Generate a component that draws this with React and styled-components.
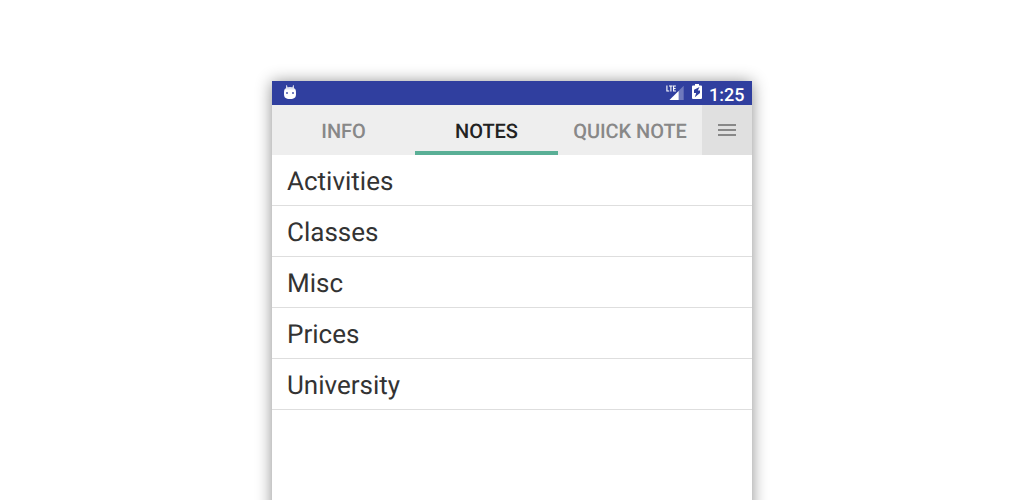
import React from "react";
import styled, { createGlobalStyle } from "styled-components";

const GlobalStyle = createGlobalStyle`
  *, *::before, *::after { box-sizing: border-box; }
  body {
    margin: 0;
    background: #fff;
    font-family: Roboto, "Liberation Sans", sans-serif;
    text-rendering: geometricPrecision;
    overflow: hidden;
  }
`;

const Stage = styled.main`
  height: 500px;
  padding-top: 81px;
  display: flex;
  justify-content: center;
  align-items: flex-start;
  overflow: hidden;
`;

const Phone = styled.div`
  width: 480px;
  height: 800px;
  flex: none;
  background: #fff;
  box-shadow: 0 1px 15px rgba(0, 0, 0, 0.45);
`;

const StatusBar = styled.header`
  height: 24px;
  padding: 0 8px 0 12px;
  display: flex;
  align-items: flex-start;
  background: #303f9f;
  color: #fff;
`;

const StatusIcon = styled.svg`
  display: block;
  flex: none;
  margin-left: ${(p) => p.$gap || 0}px;
`;

const Spacer = styled.div`
  flex: 1;
`;

const Clock = styled.time`
  width: 42px;
  padding-left: 7px;
  font-size: 18px;
  font-weight: 500;
  line-height: 30px;
  white-space: nowrap;
`;

const TabBar = styled.nav`
  height: 50px;
  display: flex;
  background: #eee;
`;

const Tab = styled.button`
  flex: none;
  width: ${(p) => p.$width}px;
  padding: 6px 0 0;
  border: 0;
  border-bottom: 4px solid ${(p) => (p.$active ? "#5aaf96" : "transparent")};
  background: none;
  color: ${(p) => (p.$active ? "#222" : "#888")};
  font: 500 20px/40px Roboto, "Liberation Sans", sans-serif;
  letter-spacing: -0.05px;
  text-rendering: inherit;
  white-space: nowrap;
`;

const MenuButton = styled.button`
  width: 50px;
  padding: 0;
  border: 0;
  display: flex;
  align-items: center;
  justify-content: center;
  background: #e0e0e0;
`;

const NoteList = styled.ul`
  margin: 0;
  padding: 0;
  list-style: none;
`;

const NoteRow = styled.li`
  height: 51px;
  padding: 2px 15px 0;
  border-bottom: 1px solid #dedede;
  color: #333;
  font-size: 26px;
  line-height: 50px;
`;

const tabs = [
  { label: "INFO", width: 143 },
  { label: "NOTES", width: 143, active: true },
  { label: "QUICK NOTE", width: 144 },
];

const notes = ["Activities", "Classes", "Misc", "Prices", "University"];

const AndroidIcon = () => (
  <StatusIcon width="12" height="24" viewBox="0 0 12 24">
    <path d="M2 4.200h1l.7 2.800H2ZM10 4.200H9L8.300 7H10Z" fill="#fff" fillOpacity=".75" />
    <path d="M.6 9C1 7 3 6 6 6s5 1 5.400 3Z" fill="#fff" fillOpacity=".85" />
    <path d="M.4 8.600h11.200c.3 1.200.4 2.700.4 4.200 0 4-1.500 5.200-6 5.200s-6-1.200-6-5.200c0-1.500.1-3 .4-4.200Z" fill="#fff" />
    <path d="M2 11h2v2H2zM8 11h2v2H8z" fill="#303f9f" fillOpacity=".65" />
  </StatusIcon>
);

const SignalIcon = () => (
  <StatusIcon width="18" height="24" viewBox="0 0 18 24">
    <path d="M17.700 4.800V19H3.500Z" fill="#fff" fillOpacity=".3" />
    <path d="M12.600 9.900V19H3.500Z" fill="#fff" />
    <path
      d="M.9 4.500v5.500h2.300M3 5h3.600M4.900 5v5.500M9.900 5H7.600v5h2.300M7.600 7.500h2"
      fill="none"
      stroke="#fff"
      strokeWidth="1.1"
    />
  </StatusIcon>
);

const BatteryIcon = () => (
  <StatusIcon $gap={8} width="10" height="24" viewBox="0 0 10 24">
    <path d="M3 3h4v1.400h2a1 1 0 0 1 1 1V17a1 1 0 0 1-1 1H1a1 1 0 0 1-1-1V5.400a1 1 0 0 1 1-1h2Z" fill="#fff" />
    <path d="M7.500 6 2 8.700v3.300h2.200L2.800 16.300 8 11.900V9.600H5.800Z" fill="#303f9f" />
  </StatusIcon>
);

const MenuIcon = () => (
  <svg width="18" height="12" viewBox="0 0 18 12">
    <path d="M0 0h18v2H0zM0 5h18v2H0zM0 10h18v2H0z" fill="#888" />
  </svg>
);

export default function App() {
  return (
    <>
      <GlobalStyle />
      <Stage>
        <Phone>
          <StatusBar>
            <AndroidIcon />
            <Spacer />
            <SignalIcon />
            <BatteryIcon />
            <Clock>1:25</Clock>
          </StatusBar>
          <TabBar>
            {tabs.map((tab) => (
              <Tab key={tab.label} $width={tab.width} $active={tab.active}>
                {tab.label}
              </Tab>
            ))}
            <MenuButton aria-label="Menu">
              <MenuIcon />
            </MenuButton>
          </TabBar>
          <NoteList>
            {notes.map((note) => (
              <NoteRow key={note}>{note}</NoteRow>
            ))}
          </NoteList>
        </Phone>
      </Stage>
    </>
  );
}
